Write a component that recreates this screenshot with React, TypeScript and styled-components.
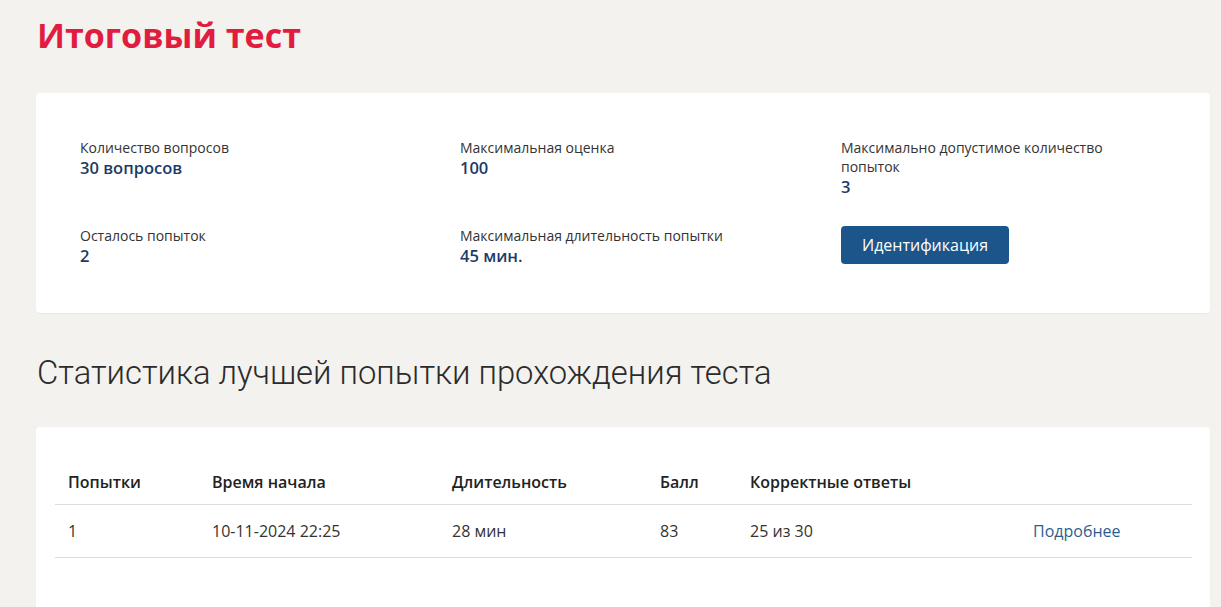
import React from 'react';
import styled, { createGlobalStyle } from 'styled-components';

const GlobalStyle = createGlobalStyle`
  html, body {
    margin: 0;
    padding: 0;
    background: #f3f2ef;
  }
  body {
    font-family: 'Open Sans', 'Noto Sans', sans-serif;
    color: #333;
  }
`;

const Page = styled.div`
  padding: 14px 11px 0 36px;
`;

const Title = styled.h1`
  margin: 0 0 37px 1px;
  font-size: 34px;
  line-height: 42px;
  font-weight: 700;
  color: #e11d3f;
`;

const Card = styled.section<{ $pad: string }>`
  background: #fff;
  border-radius: 4px;
  box-shadow: 0 1px 1px rgba(0, 0, 0, 0.04);
  padding: ${(p) => p.$pad};
`;

const InfoGrid = styled.div`
  display: grid;
  grid-template-columns: 380px 381px 300px;
  row-gap: 29px;
`;

const Field = styled.div`
  display: flex;
  flex-direction: column;
  align-items: flex-start;
`;

const Label = styled.span`
  font-size: 14px;
  line-height: 19px;
  color: #333;
`;

const Value = styled.span`
  font-size: 16.5px;
  line-height: 21px;
  font-weight: 600;
  color: #1c3b66;
`;

const Button = styled.button`
  height: 38px;
  padding: 0 21px;
  border: 0;
  border-radius: 4px;
  background: #1b558a;
  color: #fff;
  font-family: 'Open Sans', 'Noto Sans', sans-serif;
  font-size: 16px;
  cursor: pointer;
`;

const Subtitle = styled.h2`
  margin: 40px 0 34px 1px;
  font-family: Roboto, sans-serif;
  font-weight: 300;
  font-size: 32.8px;
  line-height: 40px;
  color: #2b2b2b;
`;

const Table = styled.table`
  width: 100%;
  table-layout: fixed;
  border-collapse: collapse;
  font-size: 16px;
`;

const Th = styled.th<{ $w?: number }>`
  box-sizing: border-box;
  width: ${(p) => (p.$w ? `${p.$w}px` : 'auto')};
  text-align: left;
  font-weight: 600;
  color: #222;
  padding: 10px 12px 10px 13px;
  height: 44px;
  border-bottom: 1px solid #dedede;
`;

const Td = styled.td`
  padding: 15px 12px 14px 13px;
  line-height: 23px;
  color: #333;
  border-bottom: 1px solid #dedede;
`;

const DetailLink = styled.a`
  color: #2a5f8e;
  text-decoration: none;
`;

const info = [
  { label: 'Количество вопросов', value: '30 вопросов' },
  { label: 'Максимальная оценка', value: '100' },
  { label: 'Максимально допустимое количество попыток', value: '3' },
  { label: 'Осталось попыток', value: '2' },
  { label: 'Максимальная длительность попытки', value: '45 мин.' },
];

const columns = [
  { title: 'Попытки', width: 144 },
  { title: 'Время начала', width: 240 },
  { title: 'Длительность', width: 208 },
  { title: 'Балл', width: 90 },
  { title: 'Корректные ответы', width: 283 },
  { title: '' },
];

const row = ['1', '10-11-2024 22:25', '28 мин', '83', '25 из 30'];

export default function App() {
  return (
    <>
      <GlobalStyle />
      <Page>
        <Title>Итоговый тест</Title>
        <Card $pad="45px 44px 47px 44px">
          <InfoGrid>
            {info.map((f) => (
              <Field key={f.label}>
                <Label>{f.label}</Label>
                <Value>{f.value}</Value>
              </Field>
            ))}
            <Field>
              <Button type="button">Идентификация</Button>
            </Field>
          </InfoGrid>
        </Card>
        <Subtitle>Статистика лучшей попытки прохождения теста</Subtitle>
        <Card $pad="33px 18px 80px 19px">
          <Table>
            <thead>
              <tr>
                {columns.map((c, i) => (
                  <Th key={i} $w={c.width}>
                    {c.title}
                  </Th>
                ))}
              </tr>
            </thead>
            <tbody>
              <tr>
                {row.map((v, i) => (
                  <Td key={i}>{v}</Td>
                ))}
                <Td>
                  <DetailLink href="#">Подробнее</DetailLink>
                </Td>
              </tr>
            </tbody>
          </Table>
        </Card>
      </Page>
    </>
  );
}
